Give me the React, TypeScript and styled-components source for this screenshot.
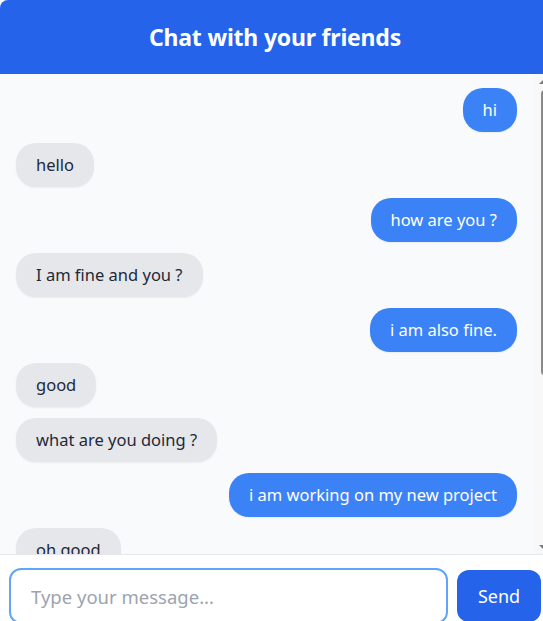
import React, { useEffect, useRef } from "react";
import styled, { createGlobalStyle } from "styled-components";

const GlobalStyle = createGlobalStyle`
  html, body {
    margin: 0;
    padding: 0;
    overflow: hidden;
    background: #ffffff;
  }
  * { box-sizing: border-box; }
`;

const Card = styled.div`
  width: 550px;
  display: flex;
  flex-direction: column;
  border-radius: 8px;
  overflow: hidden;
  background: #ffffff;
  font-family: "Noto Sans", "Open Sans", sans-serif;
`;

const Header = styled.header`
  flex-shrink: 0;
  height: 74px;
  background: #2563eb;
  color: #ffffff;
  display: flex;
  align-items: center;
  justify-content: center;
  font-size: 23px;
  font-weight: 700;
  letter-spacing: -0.2px;
`;

const MessagePane = styled.div`
  flex-shrink: 0;
  height: 480px;
  display: flex;
  background: #f9fafb;
`;

const MessageList = styled.div`
  flex: 1;
  min-width: 0;
  overflow: hidden;
  padding: 14px 18px 16px 16px;
  display: flex;
  flex-direction: column;
  gap: 11px;
`;

const ScrollTrack = styled.div`
  width: 15px;
  flex-shrink: 0;
  display: flex;
  flex-direction: column;
  background: #f8f8f8;
`;

const ScrollArrow = styled.div<{ $down?: boolean }>`
  height: 15px;
  display: flex;
  align-items: center;
  justify-content: center;

  &::before {
    content: "";
    width: 0;
    height: 0;
    border-left: 4px solid transparent;
    border-right: 4px solid transparent;
    ${(p) =>
      p.$down
        ? "border-top: 4px solid #7a7a7a;"
        : "border-bottom: 4px solid #7a7a7a;"}
  }
`;

const ScrollBody = styled.div`
  flex: 1;
  padding-top: 1px;
`;

const ScrollThumb = styled.div`
  margin-left: 6px;
  width: 7px;
  height: 285px;
  border-radius: 4px;
  background: #8a8a8a;
`;

const Row = styled.div<{ $mine: boolean }>`
  display: flex;
  flex-shrink: 0;
  justify-content: ${(p) => (p.$mine ? "flex-end" : "flex-start")};
`;

const Bubble = styled.div<{ $mine: boolean }>`
  padding: 10px 20px;
  line-height: 24px;
  font-size: 16.5px;
  border-radius: 20px;
  white-space: nowrap;
  background: ${(p) => (p.$mine ? "#3b82f6" : "#e5e7eb")};
  color: ${(p) => (p.$mine ? "#ffffff" : "#1f2937")};
  box-shadow: 0 1px 2px rgba(0, 0, 0, 0.06);
`;

const Composer = styled.div`
  flex-shrink: 0;
  border-top: 1px solid #e5e7eb;
  background: #ffffff;
  padding: 13px 9px 12px 9px;
  display: flex;
  align-items: center;
  gap: 9px;
`;

const Input = styled.input`
  flex: 1;
  min-width: 0;
  height: 56px;
  border: 2px solid #60a5fa;
  border-radius: 12px;
  padding: 0 20px;
  font-family: "Noto Sans", "Open Sans", sans-serif;
  font-size: 18.5px;
  color: #1f2937;
  caret-color: #111827;
  outline: none;
  background: #ffffff;

  &::placeholder {
    color: #9ca3af;
  }
`;

const SendButton = styled.button`
  width: 84px;
  height: 52px;
  border: none;
  border-radius: 12px;
  background: #2563eb;
  color: #ffffff;
  font-family: "Noto Sans", "Open Sans", sans-serif;
  font-size: 18px;
  cursor: pointer;
`;

type Msg = { text: string; mine: boolean };

const messages: Msg[] = [
  { text: "hi", mine: true },
  { text: "hello", mine: false },
  { text: "how are you ?", mine: true },
  { text: "I am fine and you ?", mine: false },
  { text: "i am also fine.", mine: true },
  { text: "good", mine: false },
  { text: "what are you doing ?", mine: false },
  { text: "i am working on my new project", mine: true },
  { text: "oh good", mine: false },
];

export default function App() {
  const inputRef = useRef<HTMLInputElement>(null);

  useEffect(() => {
    inputRef.current?.focus({ preventScroll: true });
    window.scrollTo(0, 0);
  }, []);

  return (
    <>
      <GlobalStyle />
      <Card>
        <Header>Chat with your friends</Header>
        <MessagePane>
          <MessageList>
            {messages.map((m, i) => (
              <Row key={i} $mine={m.mine}>
                <Bubble $mine={m.mine}>{m.text}</Bubble>
              </Row>
            ))}
          </MessageList>
          <ScrollTrack aria-hidden>
            <ScrollArrow />
            <ScrollBody>
              <ScrollThumb />
            </ScrollBody>
            <ScrollArrow $down />
          </ScrollTrack>
        </MessagePane>
        <Composer>
          <Input ref={inputRef} placeholder="Type your message..." />
          <SendButton>Send</SendButton>
        </Composer>
      </Card>
    </>
  );
}
